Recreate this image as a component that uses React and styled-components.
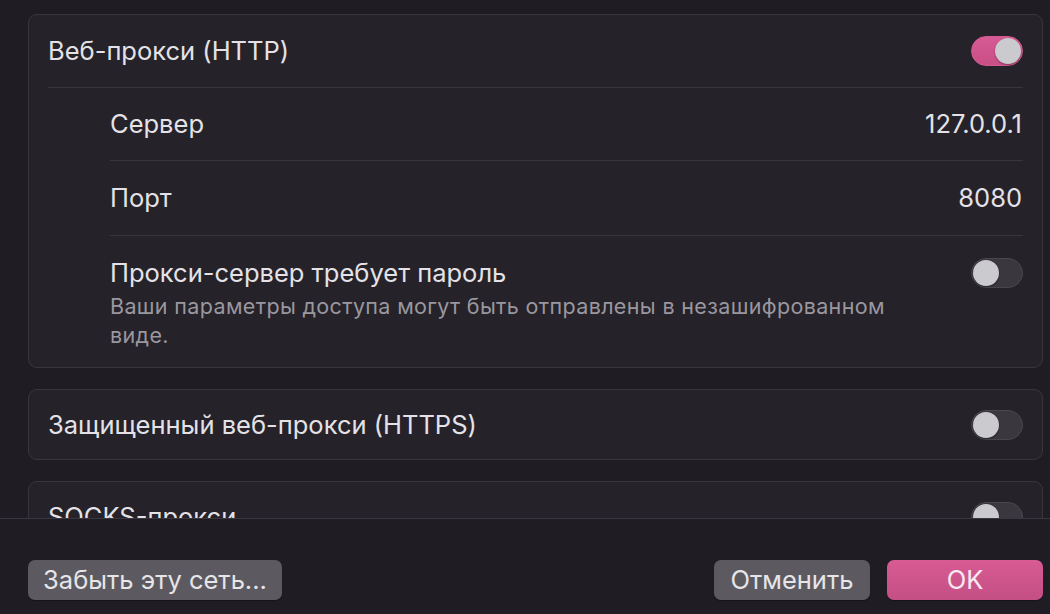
import React from "react";
import styled, { createGlobalStyle } from "styled-components";

const Global = createGlobalStyle`
  html, body { margin: 0; padding: 0; background: #1f1c24; }
  body { font-family: Inter, "Noto Sans", "Liberation Sans", sans-serif; color: #e4e2e7; -webkit-font-smoothing: antialiased; }
  * { box-sizing: border-box; }
`;

const Page = styled.div`
  width: 1050px;
  height: 614px;
  display: flex;
  flex-direction: column;
  background: #1f1c24;
  overflow: hidden;
`;

const Scroll = styled.div`
  height: 518px;
  flex: none;
  overflow: hidden;
  padding: 14px 7px 0 28px;
  display: flex;
  flex-direction: column;
  gap: 21px;
`;

const Card = styled.div`
  flex: none;
  background: #25222a;
  border: 1px solid #38353d;
  border-radius: 9px;
  padding: 0 19px 0 19px;
`;

const HeaderRow = styled.div`
  height: ${(p) => p.$h || 72}px;
  display: flex;
  align-items: center;
  justify-content: space-between;
  border-bottom: ${(p) => (p.$divider ? "1px solid #38353d" : "none")};
`;

const Sub = styled.div`
  margin-left: 62px;
`;

const SubRow = styled.div`
  height: ${(p) => p.$h || 74}px;
  display: flex;
  align-items: center;
  justify-content: space-between;
  border-bottom: ${(p) => (p.$divider ? "1px solid #38353d" : "none")};
`;

const PassRow = styled.div`
  display: flex;
  align-items: flex-start;
  justify-content: space-between;
  padding: 22px 0 17px;
`;

const Label = styled.span`
  font-size: 25.5px;
  line-height: 30px;
  color: #e4e2e7;
`;

const Value = styled.span`
  font-size: 25.5px;
  line-height: 30px;
  color: #e4e2e7;
  margin-right: 1px;
`;

const TextCol = styled.div`
  display: flex;
  flex-direction: column;
`;

const Desc = styled.div`
  margin-top: 4px;
  font-size: 21.5px;
  line-height: 29px;
  color: #9a979e;
  max-width: 790px;
  letter-spacing: 0.35px;
`;

const Track = styled.div`
  width: 52px;
  height: 30px;
  flex: none;
  border-radius: 15px;
  position: relative;
  background: ${(p) => (p.$on ? "linear-gradient(#d65a93, #c94f87)" : "#3a373f")};
  border: 1px solid ${(p) => (p.$on ? "#d25a91" : "#4a474f")};
`;

const Knob = styled.div`
  position: absolute;
  top: 1px;
  left: ${(p) => (p.$on ? "23px" : "1px")};
  width: 26px;
  height: 26px;
  border-radius: 50%;
  background: #cbcace;
  box-shadow: 0 1px 2px rgba(0, 0, 0, 0.35);
`;

const Toggle = ({ on }) => (
  <Track $on={on}>
    <Knob $on={on} />
  </Track>
);

const Footer = styled.div`
  flex: 1;
  border-top: 1px solid #3a3740;
  background: #1f1c24;
  display: flex;
  align-items: flex-start;
  padding: 41px 7px 0 28px;
`;

const Button = styled.button`
  height: 40px;
  width: ${(p) => p.$w}px;
  border: none;
  border-radius: 7px;
  font-family: inherit;
  font-size: 25.5px;
  line-height: 40px;
  padding: 0;
  color: ${(p) => (p.$primary ? "#f7e9f1" : "#e6e5e8")};
  background: ${(p) => (p.$primary ? "linear-gradient(#d95b94, #c34f84)" : "#5c5a60")};
  box-shadow: 0 1px 1px rgba(0, 0, 0, 0.3);
  cursor: default;
`;

const Spacer = styled.div`
  flex: 1;
`;

const Right = styled.div`
  display: flex;
  gap: 17px;
`;

export default function App() {
  return (
    <Page>
      <Global />
      <Scroll>
        <Card>
          <HeaderRow $divider $h={73}>
            <Label>Веб-прокси (HTTP)</Label>
            <Toggle on />
          </HeaderRow>
          <Sub>
            <SubRow $divider $h={73}>
              <Label>Сервер</Label>
              <Value>127.0.0.1</Value>
            </SubRow>
            <SubRow $divider $h={75}>
              <Label>Порт</Label>
              <Value>8080</Value>
            </SubRow>
            <PassRow>
              <TextCol>
                <Label>Прокси-сервер требует пароль</Label>
                <Desc>Ваши параметры доступа могут быть отправлены в незашифрованном виде.</Desc>
              </TextCol>
              <Toggle />
            </PassRow>
          </Sub>
        </Card>
        <Card>
          <HeaderRow $h={69}>
            <Label>Защищенный веб-прокси (HTTPS)</Label>
            <Toggle />
          </HeaderRow>
        </Card>
        <Card>
          <HeaderRow $h={69}>
            <Label>SOCKS-прокси</Label>
            <Toggle />
          </HeaderRow>
        </Card>
      </Scroll>
      <Footer>
        <Button $w={254}>Забыть эту сеть...</Button>
        <Spacer />
        <Right>
          <Button $w={156}>Отменить</Button>
          <Button $w={156} $primary>OK</Button>
        </Right>
      </Footer>
    </Page>
  );
}
